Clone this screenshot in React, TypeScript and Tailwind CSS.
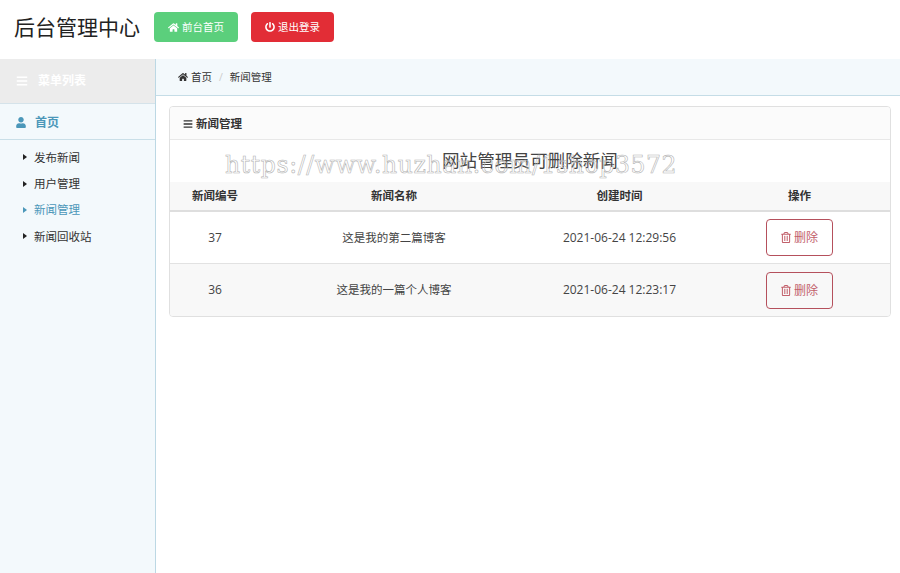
import { FaHome, FaPowerOff, FaBars, FaUser, FaRegTrashAlt } from 'react-icons/fa'

const menuItems = [
  { name: '发布新闻', active: false },
  { name: '用户管理', active: false },
  { name: '新闻管理', active: true },
  { name: '新闻回收站', active: false },
]

const rows = [
  { id: 37, title: '这是我的第二篇博客', time: '2021-06-24 12:29:56', striped: false },
  { id: 36, title: '这是我的一篇个人博客', time: '2021-06-24 12:23:17', striped: true },
]

const tableCols = 'grid grid-cols-[90px_268px_183px_177px] text-center items-center'

export default function App() {
  return (
    <div className="relative w-[900px] h-[573px] overflow-hidden bg-white text-[#333] text-xs font-['Open_Sans','Noto_Sans_CJK_SC',sans-serif]">
      {/* Top bar */}
      <header className="h-[59px] flex items-center pl-[14px] pb-[5px]">
        <h1 className="w-[140px] text-[21px] leading-none text-[#222]">后台管理中心</h1>
        <a className="flex items-center justify-center gap-[3px] w-[84px] h-[30px] rounded bg-[#5bcf7c] text-white text-[10.5px]">
          <FaHome className="w-[11px] h-[11px]" />
          前台首页
        </a>
        <a className="flex items-center justify-center gap-[3px] w-[83px] h-[30px] ml-[13px] rounded bg-[#e22d36] text-white text-[10.5px]">
          <FaPowerOff className="w-[10px] h-[10px]" />
          退出登录
        </a>
      </header>

      <div className="flex h-[514px]">
        {/* Sidebar */}
        <aside className="w-[156px] shrink-0 bg-[#f3f9fc] border-r border-[#bcd8e4]">
          <div className="h-[45px] flex items-center gap-[10px] pl-[16px] bg-[#ececec] border-b border-[#d5e3ea] text-white font-bold text-[12px]">
            <FaBars className="w-[12px] h-[12px]" />
            菜单列表
          </div>
          <div className="h-[36px] flex items-center gap-[9px] pl-[16px] pt-[2px] border-b border-[#c9dfe8] text-[#4b97b9] font-bold text-[12px]">
            <FaUser className="w-[10px] h-[11px]" />
            首页
          </div>
          <ul className="pt-[4px]">
            {menuItems.map((item) => (
              <li
                key={item.name}
                className={`h-[26.4px] flex items-center gap-[7px] pl-[23px] ${item.active ? 'text-[#4b97b9]' : 'text-[#333]'}`}
              >
                <span
                  className={`w-0 h-0 border-y-[3.5px] border-y-transparent border-l-[4px] ${item.active ? 'border-l-[#4b97b9]' : 'border-l-[#222]'}`}
                />
                <span className="text-[11.5px]">{item.name}</span>
              </li>
            ))}
          </ul>
        </aside>

        {/* Main */}
        <main className="flex-1 min-w-0">
          <div className="h-[37px] flex items-center pl-[22px] bg-[#f3f9fc] border-b border-[#c5dde7] text-[10.5px] text-[#333]">
            <FaHome className="w-[10px] h-[10px] mr-[3px]" />
            首页
            <span className="mx-[7px] text-[#ccc]">/</span>
            新闻管理
          </div>

          <div className="ml-[13px] mr-[9px] mt-[10px] h-[211px] rounded border border-[#e0e0e0] overflow-hidden">
            <div className="h-[33px] flex items-center gap-[3px] pl-[13px] pt-[2px] bg-[#fbfbfb] border-b border-[#e8e8e8] font-bold text-[#333] text-[11.5px]">
              <FaBars className="w-[10px] h-[10px]" />
              新闻管理
            </div>
            <div className="h-[42px] flex items-center justify-center text-[17.6px] text-[#444]">
              网站管理员可删除新闻
            </div>
            <div className={`${tableCols} h-[30px] bg-[#f8f8f8] border-b-2 border-[#dedede] font-bold text-[#333] text-[11.5px]`}>
              <span>新闻编号</span>
              <span>新闻名称</span>
              <span>创建时间</span>
              <span>操作</span>
            </div>
            {rows.map((row) => (
              <div
                key={row.id}
                className={`${tableCols} h-[52px] border-b border-[#e2e2e2] last:border-b-0 text-[#444] ${row.striped ? 'bg-[#f8f8f8]' : 'bg-white'}`}
              >
                <span>{row.id}</span>
                <span className="text-[11.5px]">{row.title}</span>
                <span>{row.time}</span>
                <span className="flex justify-center">
                  <button className="flex items-center justify-center gap-[3px] w-[67px] h-[37px] rounded border border-[#b5505c] text-[#c2606b] text-[12px] leading-[16px]">
                    <FaRegTrashAlt className="w-[10px] h-[11px]" />
                    <span className="pt-[1px]">删除</span>
                  </button>
                </span>
              </div>
            ))}
          </div>
        </main>
      </div>

      {/* Watermark over the page */}
      <div className="absolute left-[225px] top-[147px] text-[23.5px] leading-[36px] whitespace-nowrap text-transparent pointer-events-none tracking-[0.6px] font-['DejaVu_Serif',serif] [-webkit-text-stroke:0.6px_#b5b5b5]">
        https://www.huzhan.com/1shop3572
      </div>
    </div>
  )
}
